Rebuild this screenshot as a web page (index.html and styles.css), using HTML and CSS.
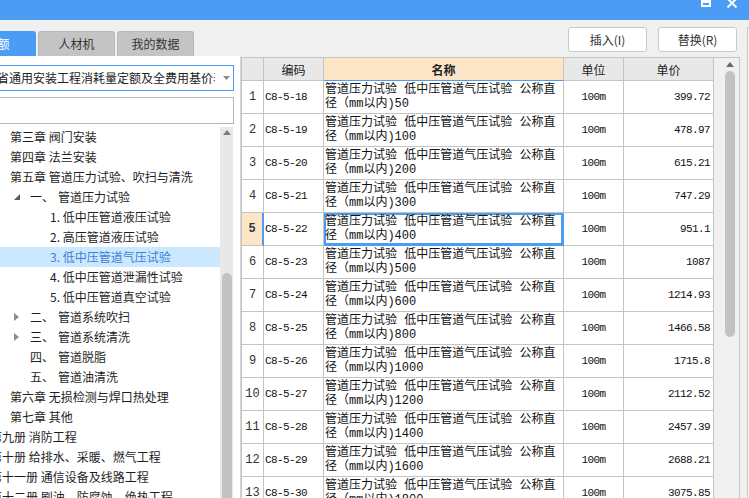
FILE: index.html
```html
<!DOCTYPE html>
<html lang="zh-CN">
<head>
<meta charset="utf-8">
<title>定额库</title>
<link rel="stylesheet" href="styles.css">
</head>
<body>
<div class="titlebar">
  <span class="win-max"></span>
  <svg class="win-close" width="10" height="8" viewBox="0 0 10 8"><path d="M1 -1 L9.5 7.5 M9 -1 L0.5 7.5" stroke="#fff" stroke-width="2" fill="none"/></svg>
</div>
<div class="main">
  <div class="left">
    <div class="tabs">
      <div class="tab active">定额</div>
      <div class="tab">人材机</div>
      <div class="tab">我的数据</div>
    </div>
    <div class="panel">
      <div class="select">
        <span class="select-text">省通用安装工程消耗量定额及全费用基价表</span>
        <svg class="caret" width="7" height="4" viewBox="0 0 7 4"><path d="M0 0 H7 L3.5 4 Z" fill="#8a8a8a"/></svg>
      </div>
      <input class="search" type="text" value="">
      <div class="tree">
        <div class="tree-list">
          <div class="node chap">第三章 阀门安装</div>
          <div class="node chap">第四章 法兰安装</div>
          <div class="node chap">第五章 管道压力试验、吹扫与清洗</div>
          <div class="node sec"><span class="twisty"><svg width="6" height="6" viewBox="0 0 6 6"><path d="M6 0 V6 H0 Z" fill="#595959"/></svg></span><span class="secno">一、</span>管道压力试验</div>
          <div class="node item">1. 低中压管道液压试验</div>
          <div class="node item">2. 高压管道液压试验</div>
          <div class="node item sel">3. 低中压管道气压试验</div>
          <div class="node item">4. 低中压管道泄漏性试验</div>
          <div class="node item">5. 低中压管道真空试验</div>
          <div class="node sec"><span class="twisty"><svg width="5" height="8" viewBox="0 0 5 8"><path d="M0 0 L5 4 L0 8 Z" fill="#8c8c8c"/></svg></span><span class="secno">二、</span>管道系统吹扫</div>
          <div class="node sec"><span class="twisty"><svg width="5" height="8" viewBox="0 0 5 8"><path d="M0 0 L5 4 L0 8 Z" fill="#8c8c8c"/></svg></span><span class="secno">三、</span>管道系统清洗</div>
          <div class="node sec"><span class="twisty"></span><span class="secno">四、</span>管道脱脂</div>
          <div class="node sec"><span class="twisty"></span><span class="secno">五、</span>管道油清洗</div>
          <div class="node chap">第六章 无损检测与焊口热处理</div>
          <div class="node chap">第七章 其他</div>
          <div class="node book"><span class="label">第九册 消防工程</span></div>
          <div class="node book"><span class="label">第十册 给排水、采暖、燃气工程</span></div>
          <div class="node book"><span class="label">第十一册 通信设备及线路工程</span></div>
          <div class="node book"><span class="label">第十二册 刷油、防腐蚀、绝热工程</span></div>
        </div>
        <div class="vscroll">
          <svg class="arrow" width="8" height="5" viewBox="0 0 8 5"><path d="M0 5 L4 0 L8 5 Z" fill="#7a7a7a"/></svg>
          <div class="thumb tree-thumb"></div>
        </div>
      </div>
    </div>
  </div>
  <div class="right">
    <div class="rmain">
      <div class="toolbar">
        <button class="btn">插入(I)</button>
        <button class="btn">替换(R)</button>
      </div>
      <div class="gridrow">
        <div class="gridframe">
          <div class="grid">
            <div class="c h"></div>
            <div class="c h">编码</div>
            <div class="c h h-active">名称</div>
            <div class="c h">单位</div>
            <div class="c h">单价</div>

            <div class="c idx">1</div><div class="c code">C8-5-18</div><div class="c name">管道压力试验 低中压管道气压试验 公称直径（mm以内)50</div><div class="c unit">100m</div><div class="c price">399.72</div>
            <div class="c idx">2</div><div class="c code">C8-5-19</div><div class="c name">管道压力试验 低中压管道气压试验 公称直径（mm以内)100</div><div class="c unit">100m</div><div class="c price">478.97</div>
            <div class="c idx">3</div><div class="c code">C8-5-20</div><div class="c name">管道压力试验 低中压管道气压试验 公称直径（mm以内)200</div><div class="c unit">100m</div><div class="c price">615.21</div>
            <div class="c idx">4</div><div class="c code">C8-5-21</div><div class="c name">管道压力试验 低中压管道气压试验 公称直径（mm以内)300</div><div class="c unit">100m</div><div class="c price">747.29</div>
            <div class="c idx sel">5</div><div class="c code">C8-5-22</div><div class="c name focus">管道压力试验 低中压管道气压试验 公称直径（mm以内)400</div><div class="c unit">100m</div><div class="c price">951.1</div>
            <div class="c idx">6</div><div class="c code">C8-5-23</div><div class="c name">管道压力试验 低中压管道气压试验 公称直径（mm以内)500</div><div class="c unit">100m</div><div class="c price">1087</div>
            <div class="c idx">7</div><div class="c code">C8-5-24</div><div class="c name">管道压力试验 低中压管道气压试验 公称直径（mm以内)600</div><div class="c unit">100m</div><div class="c price">1214.93</div>
            <div class="c idx">8</div><div class="c code">C8-5-25</div><div class="c name">管道压力试验 低中压管道气压试验 公称直径（mm以内)800</div><div class="c unit">100m</div><div class="c price">1466.58</div>
            <div class="c idx">9</div><div class="c code">C8-5-26</div><div class="c name">管道压力试验 低中压管道气压试验 公称直径（mm以内)1000</div><div class="c unit">100m</div><div class="c price">1715.8</div>
            <div class="c idx">10</div><div class="c code">C8-5-27</div><div class="c name">管道压力试验 低中压管道气压试验 公称直径（mm以内)1200</div><div class="c unit">100m</div><div class="c price">2112.52</div>
            <div class="c idx">11</div><div class="c code">C8-5-28</div><div class="c name">管道压力试验 低中压管道气压试验 公称直径（mm以内)1400</div><div class="c unit">100m</div><div class="c price">2457.39</div>
            <div class="c idx">12</div><div class="c code">C8-5-29</div><div class="c name">管道压力试验 低中压管道气压试验 公称直径（mm以内)1600</div><div class="c unit">100m</div><div class="c price">2688.21</div>
            <div class="c idx">13</div><div class="c code">C8-5-30</div><div class="c name">管道压力试验 低中压管道气压试验 公称直径（mm以内)1800</div><div class="c unit">100m</div><div class="c price">3075.85</div>
          </div>
          <div class="tscroll">
            <svg class="arrow" width="8" height="5" viewBox="0 0 8 5"><path d="M0 5 L4 0 L8 5 Z" fill="#6a6a6a"/></svg>
            <div class="thumb grid-thumb"></div>
          </div>
        </div>
      </div>
    </div>
    <div class="side"></div>
  </div>
</div>
</body>
</html>
```
FILE: styles.css
```css
* { box-sizing: border-box; }
html, body { margin: 0; padding: 0; }
body {
  width: 749px;
  height: 498px;
  overflow: hidden;
  background: #f0f0f0;
  font-family: "Noto Sans CJK SC", "Noto Sans", sans-serif;
  font-size: 12px;
  color: #1e1e1e;
}

/* title bar */
.titlebar {
  height: 20px;
  background: #4a9cf5;
  display: flex;
  justify-content: flex-end;
  align-items: flex-start;
  padding-right: 12px;
  gap: 16px;
  overflow: hidden;
}
.win-max {
  display: block;
  width: 10px;
  height: 7px;
  border: 2px solid #fff;
  border-top-width: 3px;
}
.win-close { display: block; }

.main { display: flex; height: 478px; }

/* left side */
.left { width: 241px; display: flex; flex-direction: column; }
.tabs {
  height: 36px;
  padding-top: 11px;
  display: flex;
  gap: 2px;
  margin-left: -41px;
}
.tab {
  flex: none;
  width: 77px;
  height: 25px;
  line-height: 24px;
  text-align: center;
  background: #c4c4c4;
  border: 1px solid #b8b8b8;
  border-bottom: none;
  border-radius: 3px 3px 0 0;
  color: #333;
}
.tab.active { background: #4a9cf5; border-color: #4a9cf5; color: #fff; }

.panel {
  flex: 1;
  min-height: 0;
  background: #fff;
  border-right: 1px solid #d6d6d6;
  padding: 9px 6px 0 0;
  display: flex;
  flex-direction: column;
  overflow: hidden;
}
.select {
  flex: none;
  height: 26px;
  margin-left: -10px;
  border: 1px solid #4a9cf5;
  display: flex;
  align-items: center;
  padding-left: 6px;
}
.select-text {
  flex: 1;
  min-width: 0;
  overflow: hidden;
  white-space: nowrap;
  line-height: 20px;
  color: #222;
}
.caret { flex: none; margin: 0 3px 0 8px; display: block; }
.search {
  flex: none;
  display: block;
  height: 27px;
  margin: 6px 0 0 -10px;
  border: 1px solid #b6b6b6;
  background: #fff;
  padding: 0 4px;
  font: inherit;
  outline: none;
}
.tree { flex: 1; min-height: 0; margin-top: 3px; display: flex; }
.tree-list { width: 220px; overflow: hidden; }
.node {
  height: 20px;
  line-height: 20px;
  white-space: nowrap;
  display: flex;
  align-items: center;
}
.node.chap { padding-left: 10px; }
.node.book .label { margin-left: -10px; }
.node.sec { padding-left: 14px; }
.node.item { padding-left: 50px; }
.node.sel { background: #cce8ff; color: #3a80d6; }
.twisty { flex: none; width: 16px; height: 20px; display: flex; align-items: center; }
.twisty svg { display: block; }
.secno { display: inline-block; width: 28px; }

.vscroll {
  width: 13px;
  background: #e8e8e8;
  display: flex;
  flex-direction: column;
  align-items: center;
  padding-top: 3px;
  overflow: hidden;
}
.arrow { display: block; flex: none; }
.thumb { flex: none; width: 10px; border-radius: 5px; background: #c2c2c2; }
.tree-thumb { margin-top: 138px; height: 300px; }

/* right side */
.right { flex: 1; min-width: 0; display: flex; }
.rmain { flex: 1; min-width: 0; display: flex; flex-direction: column; }
.side {
  flex: none;
  width: 2px;
  margin-top: 7px;
  border-left: 1px solid #c8c8c8;
  border-top: 1px solid #c8c8c8;
  background: #f7f7f7;
}
.toolbar {
  height: 37px;
  flex: none;
  display: flex;
  justify-content: flex-end;
  align-items: flex-start;
  padding: 7px 10px 0 0;
  gap: 11px;
}
.btn {
  width: 79px;
  height: 25px;
  border: 1px solid #c9c9c9;
  border-radius: 3px;
  background: #fff;
  font-family: "Noto Sans CJK SC", "Noto Sans", sans-serif;
  font-size: 12px;
  color: #333;
  padding: 0;
}
.gridrow { flex: 1; min-height: 0; display: flex; padding-right: 7px; }
.gridframe {
  flex: 1;
  min-width: 0;
  display: flex;
  border-top: 1px solid #c4c4c4;
  border-right: 1px solid #c4c4c4;
  overflow: hidden;
}
.grid {
  flex: none;
  width: 473px;
  border-left: 1px solid #c4c4c4;
  display: grid;
  grid-template-columns: 22px 60px 240px 60px 90px;
  grid-template-rows: 23px;
  grid-auto-rows: 33px;
  align-content: start;
}
.c {
  border-right: 1px solid #c4c4c4;
  border-bottom: 1px solid #c4c4c4;
  background: #fff;
  display: flex;
  align-items: center;
  overflow: hidden;
  white-space: nowrap;
  color: #111;
}
.h { background: #e8e8e8; justify-content: center; color: #222; }
.h-active { background: #fde6c8; font-weight: bold; border-bottom-color: #4a9cf5; }
.idx {
  justify-content: center;
  font-family: "Liberation Mono", monospace;
  font-size: 12px;
  color: #333;
}
.idx.sel { background: #fde6c8; font-weight: bold; border-right: 2px solid #4a9cf5; }
.code, .unit, .price {
  font-family: "Liberation Mono", monospace;
  font-size: 11px;
  letter-spacing: -0.6px;
}
.code { padding-left: 1px; }
.unit { justify-content: center; }
.price { justify-content: flex-end; padding-right: 3px; }
.name {
  padding-left: 1px;
  white-space: normal;
  line-height: 14px;
  font-family: "Liberation Mono", "Noto Sans CJK SC", monospace;
  font-size: 12px;
}
.name.focus {
  border-right-color: #4a9cf5;
  border-bottom-color: #4a9cf5;
  box-shadow: inset 0 0 0 2px #4a9cf5;
}

.tscroll {
  flex: 1;
  display: flex;
  flex-direction: column;
  padding: 4px 0 0 11px;
  background: #f0f0f0;
}
.tscroll .arrow { margin-left: 1px; }
.grid-thumb { margin-top: 4px; height: 266px; }
```
